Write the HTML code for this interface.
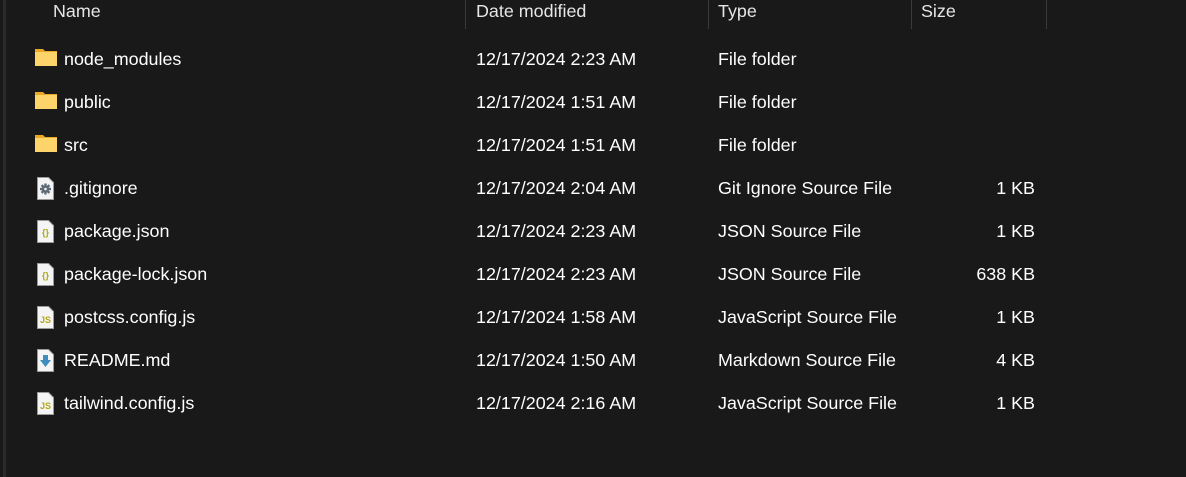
<!DOCTYPE html>
<html><head><meta charset="utf-8"><style>
body{margin:0;width:1186px;height:477px;background:#191919;overflow:hidden;font-family:"Liberation Sans",sans-serif;color:#fff;position:relative}
.lb{position:absolute;left:3px;top:0;width:3px;height:477px;background:#2a2a2a}
.sep{position:absolute;top:0;width:1px;height:29px;background:#3a3a3a}
.t{position:absolute;font-size:17.9px;white-space:nowrap;line-height:20px}
.h{color:#e6e6e6}
.r{text-align:right}
svg{position:absolute}
</style></head><body>
<div class="lb"></div>
<div class="sep" style="left:465px"></div>
<div class="sep" style="left:708px"></div>
<div class="sep" style="left:911px"></div>
<div class="sep" style="left:1046px"></div>
<div class="t h" style="left:53px;top:1px">Name</div>
<div class="t h" style="left:476px;top:1px">Date modified</div>
<div class="t h" style="left:718px;top:1px">Type</div>
<div class="t h" style="left:921px;top:1px">Size</div>

<svg style="left:34px;top:48px" width="24" height="20"><path d="M1 1h8l2 2h12v15H1z" fill="#e9a826"/><rect x="1" y="4" width="22" height="14" fill="#fcd46a"/></svg>
<svg style="left:34px;top:91px" width="24" height="20"><path d="M1 1h8l2 2h12v15H1z" fill="#e9a826"/><rect x="1" y="4" width="22" height="14" fill="#fcd46a"/></svg>
<svg style="left:34px;top:134px" width="24" height="20"><path d="M1 1h8l2 2h12v15H1z" fill="#e9a826"/><rect x="1" y="4" width="22" height="14" fill="#fcd46a"/></svg>

<svg style="left:37px;top:177px" width="17" height="23"><path d="M0.5 0.5h11l5 5v17H0.5z" fill="#f4f4f4" stroke="#9a9a9a"/><g fill="#5d6b78"><rect x="7.3" y="6.5" width="2.4" height="11"/><rect x="3" y="10.8" width="11" height="2.4"/><rect x="7.3" y="6.5" width="2.4" height="11" transform="rotate(45 8.5 12)"/><rect x="7.3" y="6.5" width="2.4" height="11" transform="rotate(-45 8.5 12)"/><circle cx="8.5" cy="12" r="3.6"/></g><circle cx="8.5" cy="12" r="1.3" fill="#f4f4f4"/></svg>
<svg style="left:37px;top:220px" width="17" height="23"><path d="M0.5 0.5h11l5 5v17H0.5z" fill="#f4f4f4" stroke="#9a9a9a"/><text x="8.5" y="15.5" font-size="9" font-weight="bold" text-anchor="middle" fill="#a8a81a" font-family="Liberation Sans">{}</text></svg>
<svg style="left:37px;top:263px" width="17" height="23"><path d="M0.5 0.5h11l5 5v17H0.5z" fill="#f4f4f4" stroke="#9a9a9a"/><text x="8.5" y="15.5" font-size="9" font-weight="bold" text-anchor="middle" fill="#a8a81a" font-family="Liberation Sans">{}</text></svg>
<svg style="left:37px;top:306px" width="17" height="23"><path d="M0.5 0.5h11l5 5v17H0.5z" fill="#f4f4f4" stroke="#9a9a9a"/><text x="8.5" y="17" font-size="9" font-weight="bold" text-anchor="middle" fill="#b3a818" font-family="Liberation Sans">JS</text></svg>
<svg style="left:37px;top:349px" width="17" height="23"><path d="M0.5 0.5h11l5 5v17H0.5z" fill="#f4f4f4" stroke="#9a9a9a"/><path d="M6 6h5v5h3l-5.5 7L3 11h3z" fill="#3f8dbf"/></svg>
<svg style="left:37px;top:392px" width="17" height="23"><path d="M0.5 0.5h11l5 5v17H0.5z" fill="#f4f4f4" stroke="#9a9a9a"/><text x="8.5" y="17" font-size="9" font-weight="bold" text-anchor="middle" fill="#b3a818" font-family="Liberation Sans">JS</text></svg>

<div class="t" style="left:64px;top:49px">node_modules</div>
<div class="t" style="left:64px;top:92px">public</div>
<div class="t" style="left:64px;top:135px">src</div>
<div class="t" style="left:64px;top:178px">.gitignore</div>
<div class="t" style="left:64px;top:221px">package.json</div>
<div class="t" style="left:64px;top:264px">package-lock.json</div>
<div class="t" style="left:64px;top:307px">postcss.config.js</div>
<div class="t" style="left:64px;top:350px">README.md</div>
<div class="t" style="left:64px;top:393px">tailwind.config.js</div>

<div class="t" style="left:476px;top:49px">12/17/2024 2:23 AM</div>
<div class="t" style="left:476px;top:92px">12/17/2024 1:51 AM</div>
<div class="t" style="left:476px;top:135px">12/17/2024 1:51 AM</div>
<div class="t" style="left:476px;top:178px">12/17/2024 2:04 AM</div>
<div class="t" style="left:476px;top:221px">12/17/2024 2:23 AM</div>
<div class="t" style="left:476px;top:264px">12/17/2024 2:23 AM</div>
<div class="t" style="left:476px;top:307px">12/17/2024 1:58 AM</div>
<div class="t" style="left:476px;top:350px">12/17/2024 1:50 AM</div>
<div class="t" style="left:476px;top:393px">12/17/2024 2:16 AM</div>

<div class="t" style="left:718px;top:49px">File folder</div>
<div class="t" style="left:718px;top:92px">File folder</div>
<div class="t" style="left:718px;top:135px">File folder</div>
<div class="t" style="left:718px;top:178px">Git Ignore Source File</div>
<div class="t" style="left:718px;top:221px">JSON Source File</div>
<div class="t" style="left:718px;top:264px">JSON Source File</div>
<div class="t" style="left:718px;top:307px">JavaScript Source File</div>
<div class="t" style="left:718px;top:350px">Markdown Source File</div>
<div class="t" style="left:718px;top:393px">JavaScript Source File</div>

<div class="t r" style="right:151px;top:178px">1 KB</div>
<div class="t r" style="right:151px;top:221px">1 KB</div>
<div class="t r" style="right:151px;top:264px">638 KB</div>
<div class="t r" style="right:151px;top:307px">1 KB</div>
<div class="t r" style="right:151px;top:350px">4 KB</div>
<div class="t r" style="right:151px;top:393px">1 KB</div>
</body></html>
